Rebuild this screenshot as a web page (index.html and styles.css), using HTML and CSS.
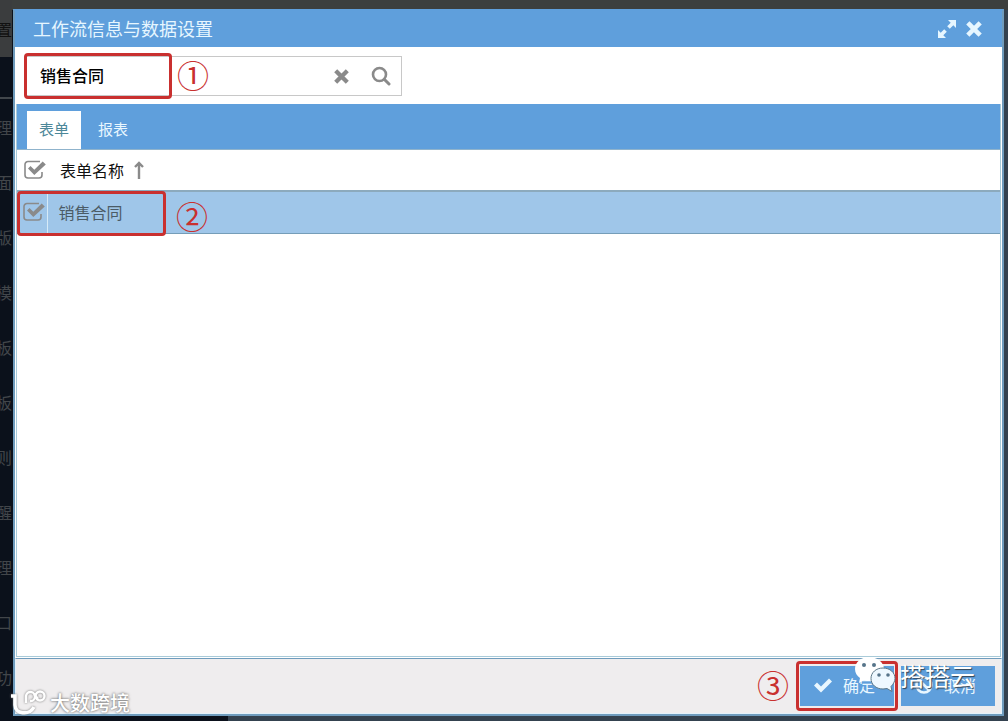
FILE: index.html
```html
<!DOCTYPE html>
<html lang="zh-CN">
<head>
    <meta charset="UTF-8">
    <meta name="viewport" content="width=device-width, initial-scale=1.0">
    <title>工作流信息与数据设置</title>
    <link rel="stylesheet" href="styles.css">
</head>
<body>
    <svg class="sprite" aria-hidden="true">
        <symbol id="icon-checkbox" viewBox="0 0 22 20">
            <path d="M16 1.500H4a3 3 0 0 0-3 3V15a3 3 0 0 0 3 3h11a3 3 0 0 0 3-3v-3" fill="none" stroke="currentColor" stroke-width="1.600"/>
            <path d="M4 8.500L6.500 6l3.800 3.800 8.400-8.400L21.800 4.400 10.300 15z" fill="currentColor"/>
        </symbol>
        <symbol id="icon-times" viewBox="0 0 14 14">
            <path d="M3 3l8 8M11 3l-8 8" stroke="currentColor" stroke-width="4" stroke-linecap="square"/>
        </symbol>
    </svg>

    <!-- Page behind the dialog -->
    <div class="backdrop">
        <div class="backdrop-bar">置</div>
        <ul class="backdrop-menu">
            <li>理</li>
            <li>面</li>
            <li>版</li>
            <li>模</li>
            <li>板</li>
            <li>板</li>
            <li>则</li>
            <li>醒</li>
            <li>理</li>
            <li>口</li>
            <li>功</li>
        </ul>
    </div>

    <div class="dialog" role="dialog" aria-labelledby="dialogTitle">
        <div class="dialog-header">
            <h1 id="dialogTitle">工作流信息与数据设置</h1>
            <button class="icon-btn" aria-label="最大化">
                <svg width="20" height="20" viewBox="0 0 20 20"><path d="M11 1h8v8l-2.700-2.700-3.500 3.500-2.600-2.600 3.500-3.500zM9 19H1v-8l2.700 2.700 3.500-3.500 2.600 2.600-3.500 3.500z" fill="currentColor"/></svg>
            </button>
            <button class="icon-btn" aria-label="关闭">
                <svg width="16" height="16"><use href="#icon-times"/></svg>
            </button>
        </div>

        <div class="toolbar">
            <div class="search">
                <input type="text" id="searchInput" aria-label="搜索" value="销售合同">
                <button class="search-btn" aria-label="清除">
                    <svg width="15" height="15"><use href="#icon-times"/></svg>
                </button>
                <button class="search-btn" aria-label="查询">
                    <svg width="20" height="20" viewBox="0 0 20 20"><circle cx="8.500" cy="8.500" r="6.500" fill="none" stroke="currentColor" stroke-width="2.600"/><path d="M13.500 13.500l4.500 4.500" stroke="currentColor" stroke-width="3" stroke-linecap="round"/></svg>
                </button>
                <div class="mark mark-search"><span class="mark-num">①</span></div>
            </div>
        </div>

        <div class="panel">
            <div class="tabs" role="tablist">
                <button class="tab active" role="tab" aria-selected="true">表单</button>
                <button class="tab" role="tab" aria-selected="false">报表</button>
            </div>
            <table class="grid">
                <thead>
                    <tr>
                        <th class="col-check">
                            <label class="check">
                                <input type="checkbox" aria-label="全选" checked>
                                <svg width="22" height="20"><use href="#icon-checkbox"/></svg>
                            </label>
                        </th>
                        <th>表单名称 <svg class="sort" width="10" height="18" viewBox="0 0 10 18"><path d="M5 18V2M1 6l4-4 4 4" fill="none" stroke="currentColor" stroke-width="2.400"/></svg></th>
                    </tr>
                </thead>
                <tbody>
                    <tr class="selected">
                        <td class="col-check">
                            <label class="check">
                                <input type="checkbox" aria-label="销售合同" checked>
                                <svg width="22" height="20"><use href="#icon-checkbox"/></svg>
                            </label>
                            <div class="mark mark-row"><span class="mark-num">②</span></div>
                        </td>
                        <td>销售合同</td>
                    </tr>
                </tbody>
            </table>
        </div>

        <div class="dialog-footer">
            <div class="confirm">
                <button class="btn">
                    <svg width="20" height="16" viewBox="0 0 20 16"><path d="M1 8.500L4 5.500l4 4L16 1.500l3 3L8 15.500z" fill="currentColor"/></svg>
                    确定
                </button>
                <div class="mark mark-confirm"><span class="mark-num">③</span></div>
            </div>
            <button class="btn">
                <svg width="20" height="20" viewBox="0 0 20 20"><circle cx="10" cy="10" r="7.500" fill="none" stroke="currentColor" stroke-width="2.600"/><path d="M5 5l10 10" stroke="currentColor" stroke-width="2.600"/></svg>
                取消
            </button>
        </div>
    </div>

    <!-- Watermarks -->
    <div class="watermark watermark-left">
        <svg width="38" height="28" viewBox="0 0 38 28" fill="none" stroke="currentColor">
            <path d="M1 7h4v9c0 9 14 11 19 2" stroke-width="3.500"/>
            <path d="M16 14V7a4.500 4.500 0 1 1 4 5" stroke-width="2.400"/>
            <path d="M24 5l4 5" stroke-width="2.400"/>
            <circle cx="30" cy="7" r="4.500" stroke-width="2.400"/>
        </svg>
        <span>大数跨境</span>
    </div>
    <div class="watermark watermark-right">
        <svg width="42" height="38" viewBox="0 0 42 38">
            <path d="M15 1C7 1 1 6 1 13c0 4 2 7 5 9l-1 5 5-3c2 1 4 1 6 1 8 0 14-5 14-12S23 1 15 1z" fill="#fff"/>
            <path d="M29 12c-7 0-12 4.500-12 10.500S22 33 29 33l4-.5 5 3-1-5c2-2 4-5 4-8C41 16.500 36 12 29 12z" fill="#eef8ff" stroke="#5d7888"/>
            <g fill="#56748a"><circle cx="10" cy="9" r="2"/><circle cx="20" cy="9" r="2"/><circle cx="25" cy="19" r="1.800"/><circle cx="34" cy="19" r="1.800"/></g>
        </svg>
        <span>搭搭云</span>
    </div>
</body>
</html>
```
FILE: styles.css
```css
:root {
    --primary-color: #5f9fdc;
    --selected-color: #9fc6e9;
    --frame-color: #6f9cbd;
    --line-color: #a9cbd9;
    --mark-color: #c9302f;
    --icon-color: #8a8a8a;
}

* {
    box-sizing: border-box;
    margin: 0;
    padding: 0;
}

body {
    min-height: 100vh;
    display: flex;
    padding: 9px 4px 5px 13px;
    background: linear-gradient(90deg, #0b111b 228px, #34424f 228px);
    color: #111;
    font-family: "Noto Sans CJK SC", "Noto Sans", sans-serif;
    font-size: 16px;
}

button,
input {
    border: none;
    background: none;
    color: inherit;
    font: inherit;
}

button {
    cursor: pointer;
}

.sprite {
    position: absolute;
    width: 0;
    height: 0;
}

/* Page behind the dialog */
.backdrop {
    position: absolute;
    inset: 0;
    overflow: hidden;
    color: #42464a;
    background: linear-gradient(#3c3f3e 10px, transparent 10px);
}

.backdrop-bar {
    width: 12px;
    height: 57px;
    display: flex;
    justify-content: flex-end;
    align-items: center;
    background: #3b3d3e;
    color: #111;
}

.backdrop-menu {
    width: 12px;
    margin-top: 40px;
    border-top: 2px solid #42474c;
    list-style: none;
}

.backdrop-menu li {
    height: 55px;
    display: flex;
    justify-content: flex-end;
    align-items: center;
}

/* Dialog */
.dialog {
    position: relative;
    flex: 1;
    display: flex;
    flex-direction: column;
    border: 2px solid var(--frame-color);
    border-top-color: var(--primary-color);
    background: #fff;
}

.dialog-header {
    height: 36px;
    display: flex;
    align-items: center;
    gap: 9px;
    padding: 0 20px 0 18px;
    background: var(--primary-color);
    color: #e6f6ff;
}

.dialog-header h1 {
    flex: 1;
    font-size: 18px;
    font-weight: 400;
    line-height: 20px;
    padding-bottom: 2px;
}

.icon-btn {
    display: flex;
}

.toolbar {
    padding: 9px;
    height: 57px;
}

.search {
    position: relative;
    width: 378px;
    height: 40px;
    display: flex;
    align-items: center;
    border: 1px solid #c8c8c8;
}

.search input {
    flex: 1;
    min-width: 0;
    padding: 0 0 2px 15px;
    color: #000;
    font-weight: 500;
    outline: none;
}

.search-btn {
    width: 40px;
    display: flex;
    justify-content: center;
    color: var(--icon-color);
}

/* Tabs and grid */
.panel {
    flex: 1;
    margin: 0 1px 1px;
    border: 1px solid var(--line-color);
    border-top: none;
}

.tabs {
    height: 46px;
    display: flex;
    align-items: flex-end;
    gap: 5px;
    padding-left: 10px;
    background: var(--primary-color);
    border-bottom: 1px solid #8fb3cc;
}

.tab {
    height: 38px;
    padding: 0 12px 3px;
    color: #e9f7ff;
    font-size: 15px;
}

.tab.active {
    background: #fff;
    color: #4c8799;
}

.grid {
    width: 100%;
    border-collapse: collapse;
    table-layout: fixed;
}

.grid th {
    height: 41px;
    padding-left: 13px;
    font-weight: 400;
    text-align: left;
}

.grid td {
    height: 42px;
    padding-left: 11px;
}

.grid .col-check {
    position: relative;
    width: 30px;
    padding-left: 7px;
}

.selected {
    background: var(--selected-color);
    color: #4b5b66;
    border-top: 2px solid #8caabd;
    border-bottom: 1px solid #759db8;
}

.selected .col-check {
    border-right: 1px solid #d6eaf7;
    padding-left: 6px;
}

.check {
    display: grid;
    color: var(--icon-color);
}

.check input,
.check svg {
    grid-area: 1 / 1;
}

.check input {
    width: 22px;
    height: 20px;
    appearance: none;
}

.sort {
    margin-left: 6px;
    color: var(--icon-color);
    vertical-align: -2px;
}

/* Footer */
.dialog-footer {
    height: 56px;
    display: flex;
    justify-content: flex-end;
    align-items: center;
    gap: 7px;
    padding: 0 6px;
    border: 1px solid #e4f2fb;
    border-top-color: var(--frame-color);
    background: #efedee;
}

.confirm {
    position: relative;
}

.btn {
    width: 94px;
    height: 40px;
    display: flex;
    align-items: center;
    justify-content: center;
    gap: 10px;
    padding: 0 6px 2px 0;
    background: var(--primary-color);
    color: #e9f7ff;
}

/* Numbered step marks */
.mark {
    position: absolute;
    z-index: 1;
    border: 3px solid var(--mark-color);
    border-radius: 4px;
    pointer-events: none;
}

.mark-num {
    position: absolute;
    top: 50%;
    left: 100%;
    margin-top: -21px;
    margin-left: 8px;
    color: var(--mark-color);
    font-size: 32px;
    line-height: 38px;
}

.mark-search {
    top: -4px;
    left: -1px;
    width: 148px;
    height: 46px;
}

.mark-row {
    top: -1px;
    left: 0;
    width: 149px;
    height: 45px;
}

.mark-row .mark-num {
    margin-top: -18px;
    margin-left: 13px;
}

.mark-confirm {
    inset: -5px -4px;
}

.mark-confirm .mark-num {
    right: 100%;
    left: auto;
    margin-right: 10px;
}

/* Watermarks */
.watermark {
    position: absolute;
    z-index: 2;
    display: flex;
    align-items: center;
    color: #fff;
    pointer-events: none;
}

.watermark-left {
    left: 10px;
    bottom: 4px;
    gap: 2px;
    font-size: 20px;
    font-weight: 500;
    line-height: 28px;
    text-shadow: 0 0 3px #777, 0 0 2px #999;
}

.watermark-left svg {
    filter: drop-shadow(0 0 1px #777);
}

.watermark-right {
    right: 33px;
    bottom: 27px;
    gap: 4px;
    font-size: 25px;
    line-height: 38px;
    text-shadow: 1px 1px 1px #345;
}
```
